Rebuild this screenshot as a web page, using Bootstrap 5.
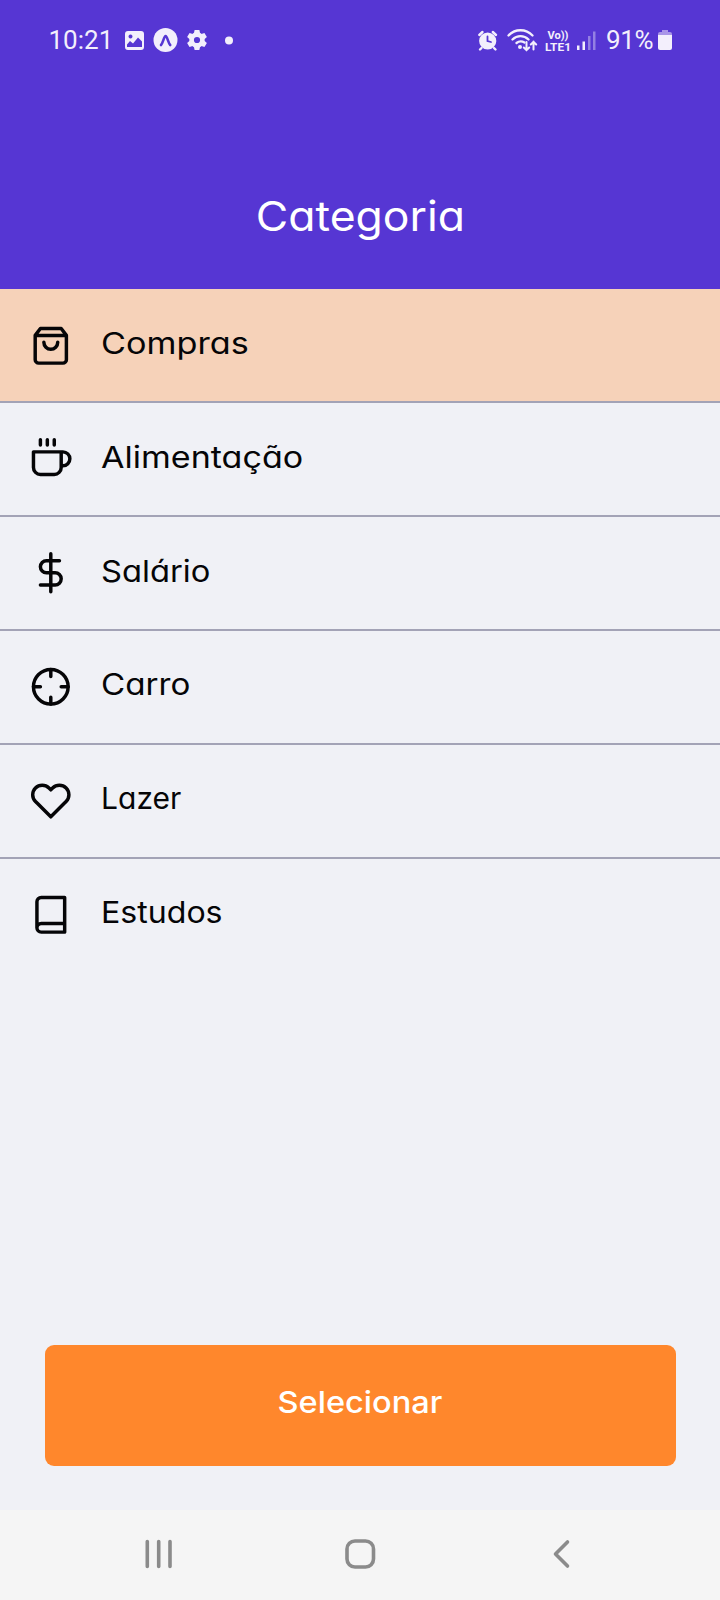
<!DOCTYPE html>
<html lang="pt-BR">
<head>
<meta charset="utf-8">
<meta name="viewport" content="width=device-width, initial-scale=1">
<title>Categoria</title>
<link href="https://cdn.jsdelivr.net/npm/bootstrap@5.3.0/dist/css/bootstrap.min.css" rel="stylesheet">
<style>
  body { font-family: Inter, "Open Sans", sans-serif; font-feature-settings: "cv11"; background: #f0f1f6; color: #050507; }
  .screen { height: 1600px; background: #f0f1f6; }
  .screen-header { background: #5636d3; height: 289.3px; color: #fff; }
  .status-bar { height: 80px; font: 400 26px/80px Roboto, sans-serif; color: #f3effc; padding: 0 47px 0 48.5px; }
  .status-bar span { white-space: nowrap; }
  .clock { width: 71.5px; }
  .battery-level { width: 52px; margin-left: 9px; letter-spacing: -.3px; }
  .screen-title { font-size: 41px; line-height: 60px; padding-top: 106px; font-weight: 400; margin: 0; }
  .category { height: 113.9px; padding: 0 30px; border-bottom: 2px solid #a3a3b6; }
  .category.active { background: #f6d2b9; }
  .category:last-child { border-bottom: 0; }
  .category svg { width: 41.6px; height: 41.6px; margin-top: 35.3px; }
  .category-name { font-size: 30px; line-height: 40px; margin: 33.5px 0 0 29.5px; white-space: nowrap; transform-origin: left; }
  /* widened letterforms, closer to a geometric face */
  .wide-label { display: inline-block; transform: scaleX(1.085); }
  .category:nth-child(1) .category-name { transform: scaleX(1.14); }
  .category:nth-child(2) .category-name { transform: scaleX(1.135); }
  .category:nth-child(3) .category-name { transform: scaleX(1.09); }
  .category:nth-child(4) .category-name { transform: scaleX(1.105); }
  .category:nth-child(6) .category-name { transform: scaleX(1.07); }
  .feather { fill: none; stroke: #050507; stroke-width: 2; stroke-linecap: round; stroke-linejoin: round; }
  .select-wrap { padding: 0 44.5px 43.5px 45.3px; }
  .btn-select, .btn-select:hover { background: #ff872c; color: #fff; height: 121px; border: 0; border-radius: 9px; font-size: 30px; font-weight: 500; line-height: 40px; padding: 0 0 7px; }
  .system-nav { background: #f5f5f5; height: 90.5px; }
</style>
</head>
<body>
<div class="screen d-flex flex-column">
  <header class="screen-header flex-shrink-0">
    <div class="status-bar d-flex align-items-center">
      <span class="clock">10:21</span>
      <svg width="120" height="80" viewBox="120 0 120 80" fill="#f3effc">
        <path fill-rule="evenodd" d="M128 31h13a3 3 0 0 1 3 3v13a3 3 0 0 1-3 3h-13a3 3 0 0 1-3-3V34a3 3 0 0 1 3-3Zm2.500 3.500a2 2 0 1 0 .01 0ZM127 47h15v-5.500l-4-4-5 6-3-2.500-3 3.500Z"/>
        <circle cx="165.500" cy="40" r="12"/>
        <path d="M161 45c2-2 3-9 4.600-9s2.600 7 4.600 9" fill="none" stroke="#5636d3" stroke-width="2.600" stroke-linecap="round"/>
        <g transform="translate(197 40)">
          <circle r="5.400" fill="none" stroke="#f3effc" stroke-width="4.600"/>
          <path id="tooth" d="M-2.400-10h4.800l.8 4h-6.400Z"/>
          <use href="#tooth" transform="rotate(60)"/><use href="#tooth" transform="rotate(120)"/><use href="#tooth" transform="rotate(180)"/><use href="#tooth" transform="rotate(240)"/><use href="#tooth" transform="rotate(300)"/>
        </g>
        <circle cx="229" cy="40.500" r="4"/>
      </svg>
      <svg class="ms-auto" width="122" height="80" viewBox="475 0 122 80" fill="#f3effc">
        <circle cx="487.700" cy="41" r="8.600"/>
        <g fill="none" stroke="#f3effc" stroke-width="2.400" stroke-linecap="round">
          <path d="M479.300 35l3.200-3M496 35l-3.200-3M481.500 48l-1.500 1.500M494 48l1.500 1.500"/>
          <path d="M487.500 36.500V41l3.500 1" stroke="#5636d3" stroke-width="1.800"/>
          <path d="M508.500 35.500c6.500-7 17.500-7 24 0M512.500 39.500c4.500-4.500 11.500-4.500 16 0M516.500 43c2.500-2 5.500-2 8-.5" stroke-width="2.300"/>
          <path d="M526.500 42v8M523.800 47.500l2.700 2.700 2.700-2.700M533.500 49.500v-8M530.800 44.500l2.700-2.700 2.700 2.700" stroke-width="2"/>
        </g>
        <circle cx="520" cy="47" r="2"/>
        <g font-family="Roboto, sans-serif" font-weight="700">
          <text x="547.500" y="38.500" font-size="10.500" textLength="21" lengthAdjust="spacingAndGlyphs">Vo))</text>
          <text x="545" y="51" font-size="11.500" textLength="26" lengthAdjust="spacingAndGlyphs">LTE1</text>
        </g>
        <path d="M577 45.500h2.500V50H577ZM582.500 41.500h2.500V50h-2.500Z"/>
        <path d="M588 36h2.500v14H588ZM593 31.500h2.500V50H593Z" opacity=".4"/>
      </svg>
      <span class="battery-level">91%</span>
      <svg width="15" height="80" viewBox="658 0 15 80">
        <path d="M658 37v-3q0-2 2-2h2v-2h6v2h2q2 0 2 2v3Z" fill="#a995e8"/>
        <path d="M658 35h14v13q0 2-2 2h-10q-2 0-2-2Z" fill="#f3effc"/>
      </svg>
    </div>
    <h1 class="screen-title text-center"><span class="wide-label">Categoria</span></h1>
  </header>

  <main class="flex-grow-1 d-flex flex-column">
    <div>
      <div class="category active d-flex align-items-start">
        <svg class="feather" viewBox="0 0 24 24"><path d="M6 2L3 6v14a2 2 0 0 0 2 2h14a2 2 0 0 0 2-2V6l-3-4zM3 6h18M16 10a4 4 0 0 1-8 0"/></svg>
        <span class="category-name">Compras</span>
      </div>
      <div class="category d-flex align-items-start">
        <svg class="feather" viewBox="0 0 24 24"><path d="M18 8h1a4 4 0 0 1 0 8h-1M2 8h16v9a4 4 0 0 1-4 4H6a4 4 0 0 1-4-4V8zM6 1v3M10 1v3M14 1v3"/></svg>
        <span class="category-name">Alimentação</span>
      </div>
      <div class="category d-flex align-items-start">
        <svg class="feather" viewBox="0 0 24 24"><path d="M12 1v22M17 5H9.500a3.500 3.500 0 0 0 0 7h5a3.500 3.500 0 0 1 0 7H6"/></svg>
        <span class="category-name">Salário</span>
      </div>
      <div class="category d-flex align-items-start">
        <svg class="feather" viewBox="0 0 24 24"><circle cx="12" cy="12" r="10"/><path d="M22 12h-4M6 12H2M12 6V2M12 22v-4"/></svg>
        <span class="category-name">Carro</span>
      </div>
      <div class="category d-flex align-items-start">
        <svg class="feather" viewBox="0 0 24 24"><path d="M20.840 4.610a5.500 5.500 0 0 0-7.780 0L12 5.670l-1.060-1.060a5.500 5.500 0 0 0-7.780 7.780l1.060 1.060L12 21.230l7.780-7.780 1.060-1.060a5.500 5.500 0 0 0 0-7.780z"/></svg>
        <span class="category-name">Lazer</span>
      </div>
      <div class="category d-flex align-items-start">
        <svg class="feather" viewBox="0 0 24 24"><path d="M4 19.500A2.500 2.500 0 0 1 6.500 17H20M6.500 2H20v20H6.500A2.500 2.500 0 0 1 4 19.500v-15A2.500 2.500 0 0 1 6.500 2z"/></svg>
        <span class="category-name">Estudos</span>
      </div>
    </div>
    <div class="select-wrap mt-auto">
      <button type="button" class="btn btn-select w-100"><span class="wide-label">Selecionar</span></button>
    </div>
  </main>

  <nav class="system-nav flex-shrink-0">
    <svg width="720" height="90" viewBox="0 1510 720 90" fill="none" stroke="#8b8b8b" stroke-width="3.600" stroke-linecap="round" stroke-linejoin="round">
      <path d="M147.300 1541.500v25M158.700 1541.500v25M170 1541.500v25"/>
      <rect x="347" y="1541" width="26.500" height="26" rx="8"/>
      <path d="M567.500 1542l-12 12 12 12"/>
    </svg>
  </nav>
</div>
<script src="https://cdn.jsdelivr.net/npm/bootstrap@5.3.0/dist/js/bootstrap.bundle.min.js"></script>
</body>
</html>
